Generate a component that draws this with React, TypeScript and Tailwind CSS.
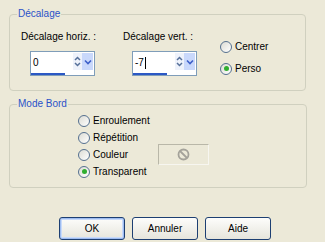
import React from "react";

function Radio({ label, checked = false }: { label: string; checked?: boolean }) {
  return (
    <div className="flex items-center h-[17px]">
      <span className="w-[12px] h-[12px] rounded-full border border-[#55708f] bg-gradient-to-br from-[#dcdcd4] to-white flex items-center justify-center shrink-0">
        {checked && <span className="w-[5px] h-[5px] rounded-full bg-[#2fae2f]" />}
      </span>
      <span className="ml-[3px] leading-[12px]">{label}</span>
    </div>
  );
}

function Spin({ value, cursor = false }: { value: string; cursor?: boolean }) {
  return (
    <div className="w-[65px] h-[25px] border border-[#7f9db9] bg-white flex flex-col">
      <div className="flex h-[19px]">
        <div className="flex-1 flex items-center pl-[2px] pt-[2px] leading-[12px]">
          <span>{value}</span>
          {cursor && <span className="w-[1px] h-[12px] bg-black ml-[1px]" />}
        </div>
        <div className="w-[9px] h-[17px] mt-[1px] flex items-center justify-center bg-[#eef2fb]">
          <svg width="7" height="13" viewBox="0 0 7 13">
            <path d="M1 5 L3.5 2.5 L6 5" stroke="#56709a" strokeWidth="1.5" fill="none" />
            <path d="M1 8 L3.5 10.5 L6 8" stroke="#56709a" strokeWidth="1.5" fill="none" />
          </svg>
        </div>
        <div className="w-[11px] h-[17px] mt-[1px] mr-[1px] flex items-center justify-center bg-[#c9d8fb]">
          <svg width="8" height="6" viewBox="0 0 8 6">
            <path d="M1 1.5 L4 4.5 L7 1.5" stroke="#3d5fc9" strokeWidth="1.6" fill="none" />
          </svg>
        </div>
      </div>
      <div className="mt-[2px] ml-[0px] w-[34px] h-[2px] bg-[#2b58c4]" />
    </div>
  );
}

function Btn({ label, def = false }: { label: string; def?: boolean }) {
  return (
    <div
      className={
        "w-[66px] h-[23px] rounded-[3px] border border-[#1d3f72] bg-gradient-to-b from-[#fdfdfb] to-[#e6e5dc] flex items-center justify-center leading-[12px] " +
        (def ? "shadow-[inset_0_0_0_1px_#9ebcf0,inset_0_0_0_2px_#c9dbfa]" : "")
      }
    >
      {label}
    </div>
  );
}

export default function App() {
  return (
    <div className="w-[325px] h-[242px] bg-[#ece9d8] text-black text-[10px] font-['Liberation_Sans',Arial,sans-serif] pt-[14px] pl-[9px] overflow-hidden">
      <div className="relative w-[297px] h-[77px] border border-[#d0d0bf] rounded-[4px]">
        <span className="absolute left-[7px] top-[-7px] px-[1px] bg-[#ece9d8] text-[#2a52c8] leading-[12px]">Décalage</span>
        <div className="flex pl-[11px] pt-[16px]">
          <div className="w-[102px] flex flex-col">
            <span className="leading-[12px]">Décalage horiz. :</span>
            <div className="mt-[8px] ml-[9px]">
              <Spin value="0" />
            </div>
          </div>
          <div className="w-[97px] flex flex-col">
            <span className="leading-[12px]">Décalage vert. :</span>
            <div className="mt-[8px] ml-[9px]">
              <Spin value="-7" cursor />
            </div>
          </div>
          <div className="flex flex-col pt-[7px] gap-[5px]">
            <Radio label="Centrer" />
            <Radio label="Perso" checked />
          </div>
        </div>
      </div>

      <div className="relative mt-[13px] w-[298px] h-[84px] border border-[#d0d0bf] rounded-[4px]">
        <span className="absolute left-[7px] top-[-7px] px-[1px] bg-[#ece9d8] text-[#2a52c8] leading-[12px]">Mode Bord</span>
        <div className="flex flex-col pl-[68px] pt-[7px]">
          <Radio label="Enroulement" />
          <Radio label="Répétition" />
          <div className="flex items-center">
            <div className="w-[80px]">
              <Radio label="Couleur" />
            </div>
            <div className="w-[51px] h-[21px] -my-[2px] border border-[#b9b7a8] border-b-[#f7f6f0] border-r-[#f7f6f0] bg-[#ece9d8] flex items-center justify-center">
              <svg width="13" height="13" viewBox="0 0 13 13">
                <circle cx="6.5" cy="6.5" r="5" stroke="#a4a29a" strokeWidth="1.8" fill="none" />
                <path d="M3 3 L10 10" stroke="#a4a29a" strokeWidth="1.8" />
              </svg>
            </div>
          </div>
          <Radio label="Transparent" checked />
        </div>
      </div>

      <div className="flex gap-[7px] mt-[29px] pl-[50px]">
        <Btn label="OK" def />
        <Btn label="Annuler" />
        <Btn label="Aide" />
      </div>
    </div>
  );
}
